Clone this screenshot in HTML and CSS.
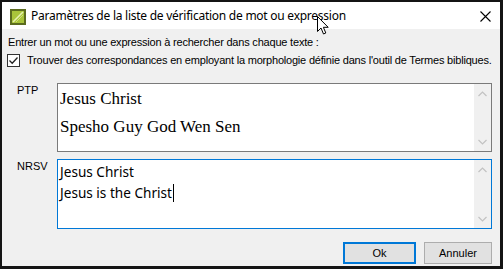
FILE: index.html
```html
<!DOCTYPE html>
<html lang="fr">
<head>
<meta charset="utf-8">
<title>Paramètres</title>
<link rel="stylesheet" href="styles.css">
</head>
<body>
<div class="window">
  <div class="titlebar">
    <svg class="app-icon" width="16" height="16" viewBox="0 0 16 16">
      <rect x="0" y="0" width="16" height="16" fill="#5b6b1f"/>
      <rect x="2" y="2" width="12" height="12" fill="#a9c43a"/>
      <path d="M3 13 L13 3" stroke="#e6f0b0" stroke-width="1.6"/>
      <path d="M6 13 L13 6" stroke="#cfe07a" stroke-width="1"/>
    </svg>
    <span class="title">Paramètres de la liste de vérification de mot ou expression</span>
    <svg class="close" width="11" height="11" viewBox="0 0 11 11">
      <path d="M0.5 0.5 L10.5 10.5 M10.5 0.5 L0.5 10.5" stroke="#000" stroke-width="1.1"/>
    </svg>
    <svg class="cursor" width="13" height="20" viewBox="0 0 13 20">
      <path d="M0.5 0.5 L0.5 15.5 L4 12 L6.5 18 L8.8 17 L6.4 11.3 L11.2 11.3 Z" fill="#fff" stroke="#000" stroke-width="1"/>
    </svg>
  </div>
  <div class="content">
    <p class="prompt">Entrer un mot ou une expression à rechercher dans chaque texte :</p>
    <label class="check-row">
      <span class="checkbox">
        <svg width="11" height="11" viewBox="0 0 11 11"><path d="M1.5 5.5 L4.2 8.2 L9.5 2.5" fill="none" stroke="#222" stroke-width="1.3"/></svg>
      </span>
      <span class="check-text">Trouver des correspondances en employant la morphologie définie dans l'outil de Termes bibliques.</span>
    </label>
    <div class="field">
      <span class="field-label">PTP</span>
      <div class="textbox">
        <div class="text serif">
          <div>Jesus Christ</div>
          <div>Spesho Guy God Wen Sen</div>
        </div>
        <div class="scrollbar">
          <svg width="9" height="6" viewBox="0 0 9 6"><path d="M0.5 5 L4.5 1 L8.5 5" fill="none" stroke="#c2c2c2" stroke-width="1.2"/></svg>
          <svg width="9" height="6" viewBox="0 0 9 6"><path d="M0.5 1 L4.5 5 L8.5 1" fill="none" stroke="#c2c2c2" stroke-width="1.2"/></svg>
        </div>
      </div>
    </div>
    <div class="field">
      <span class="field-label">NRSV</span>
      <div class="textbox focused">
        <div class="text sans">
          <div>Jesus Christ</div>
          <div>Jesus is the Christ<span class="caret"></span></div>
        </div>
        <div class="scrollbar">
          <svg width="9" height="6" viewBox="0 0 9 6"><path d="M0.5 5 L4.5 1 L8.5 5" fill="none" stroke="#c2c2c2" stroke-width="1.2"/></svg>
          <svg width="9" height="6" viewBox="0 0 9 6"><path d="M0.5 1 L4.5 5 L8.5 1" fill="none" stroke="#c2c2c2" stroke-width="1.2"/></svg>
        </div>
      </div>
    </div>
    <div class="buttons">
      <button class="btn default">Ok</button>
      <button class="btn">Annuler</button>
    </div>
  </div>
</div>
</body>
</html>
```

FILE: styles.css
```css
html, body {
  margin: 0;
  padding: 0;
}
body {
  background: #141414;
  width: 503px;
  height: 269px;
  overflow: hidden;
  font-family: "Liberation Sans", Arial, sans-serif;
  font-size: 11px;
  color: #000;
}
.window {
  margin: 2px 3px 3px 2px;
  width: 498px;
  height: 264px;
  background: #f0f0f0;
  display: flex;
  flex-direction: column;
}
.titlebar {
  position: relative;
  height: 27px;
  background: #fff;
  display: flex;
  align-items: center;
  padding-left: 8px;
  flex: none;
}
.app-icon {
  flex: none;
  margin-top: 2px;
}
.title {
  margin-left: 5px;
  font-family: "Noto Sans", "Open Sans", sans-serif;
  font-size: 12px;
  color: #000;
  letter-spacing: -0.25px;
  white-space: nowrap;
}
.close {
  margin-left: auto;
  margin-right: 9px;
  margin-top: 2px;
}
.cursor {
  position: absolute;
  left: 315px;
  top: 14px;
}
.content {
  flex: 1;
  display: flex;
  flex-direction: column;
  padding: 7px 8px 0 6px;
}
.prompt {
  margin: 0;
  line-height: 13px;
  height: 13px;
  letter-spacing: -0.2px;
  white-space: nowrap;
}
.check-row {
  display: flex;
  align-items: center;
  margin-top: 5px;
  line-height: 13px;
  height: 13px;
  margin-left: -1px;
}
.check-text {
  white-space: nowrap;
  letter-spacing: -0.2px;
}
.checkbox {
  width: 11px;
  height: 11px;
  border: 1px solid #333;
  background: #fff;
  display: flex;
  align-items: center;
  justify-content: center;
  margin-right: 7px;
  flex: none;
}
.field {
  display: flex;
  margin-top: 16px;
}
.field + .field {
  margin-top: 7px;
}
.field-label {
  width: 49px;
  padding-left: 9px;
  box-sizing: border-box;
  padding-top: 1px;
  line-height: 13px;
  flex: none;
}
.textbox {
  width: 435px;
  height: 69px;
  box-sizing: border-box;
  border: 1px solid #7a7a7a;
  background: #fff;
  display: flex;
}
.textbox.focused {
  border-color: #0078d7;
  height: 70px;
}
.text {
  flex: 1;
  padding-left: 2px;
}
.serif {
  font-family: "Liberation Serif", "Times New Roman", serif;
  font-size: 17px;
  line-height: 28px;
  padding-top: 1px;
  color: #000;
}
.sans {
  font-family: "Noto Sans", "Open Sans", sans-serif;
  font-size: 13.6px;
  line-height: 21px;
  padding-top: 1px;
  color: #000;
}
.caret {
  display: inline-block;
  width: 1px;
  height: 18px;
  background: #000;
  vertical-align: -4px;
  margin-left: 1px;
}
.scrollbar {
  width: 17px;
  background: #f0f0f0;
  display: flex;
  flex-direction: column;
  justify-content: space-between;
  align-items: center;
  padding: 7px 0 6px;
  box-sizing: border-box;
  flex: none;
}
.buttons {
  display: flex;
  justify-content: flex-end;
  margin-top: 13px;
  gap: 8px;
}
.btn {
  font-family: "Liberation Sans", Arial, sans-serif;
  font-size: 11px;
  height: 22px;
  width: 68px;
  background: #e1e1e1;
  border: 1px solid #adadad;
  color: #000;
  padding: 0;
  margin: 0;
  box-sizing: border-box;
}
.btn.default {
  width: 73px;
  border: 2px solid #0078d7;
}
```
